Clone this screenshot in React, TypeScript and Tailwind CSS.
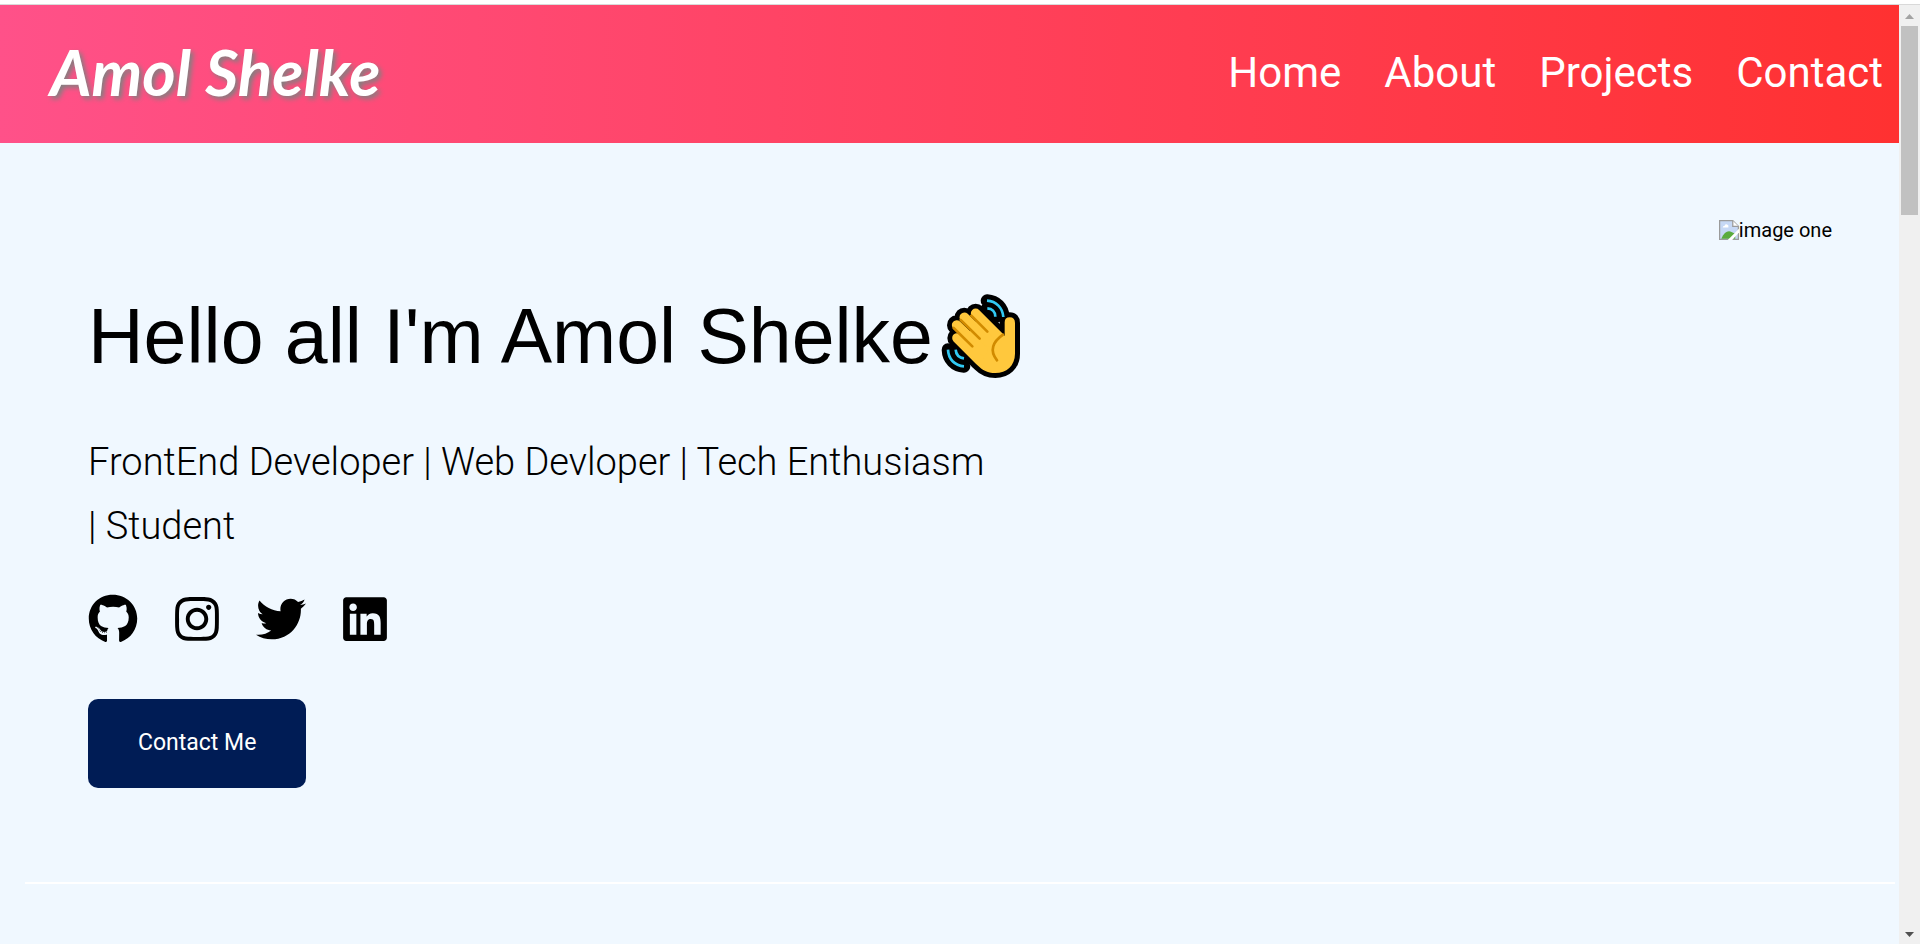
import { FaGithub, FaInstagram, FaTwitter, FaLinkedin } from "react-icons/fa";

const navItems = ["Home", "About", "Projects", "Contact"];

const socials = [
  { name: "GitHub", Icon: FaGithub },
  { name: "Instagram", Icon: FaInstagram },
  { name: "Twitter", Icon: FaTwitter },
  { name: "LinkedIn", Icon: FaLinkedin },
];

const handBody =
  "M315 196V156Q315 141 330 141Q346 141 346 158V250C346 286 320 308 287 308C262 308 246 297 235 286L180 230L230 150L300 190Z";
const handFingers = "M228 129L300 201M194 141L270 215M171 164L250 240M172 203L240 271";
const waves = "M262 91C290 93 309 112 311 140M263 114C277 115 287 124 287 139M145 238C146 266 165 286 193 288M168 238C169 253 178 262 193 264";

function WavingHand() {
  return (
    <svg viewBox="124 68 240 258" className="h-[86px] w-[80px] shrink-0" role="img" aria-label="Waving hand" fill="none" strokeLinecap="round" strokeLinejoin="round">
      <path d={waves} stroke="#000" strokeWidth="38" />
      <path d={handFingers} stroke="#000" strokeWidth="58" />
      <path d={handBody} stroke="#000" strokeWidth="30" fill="#000" />
      <path d={waves} stroke="#31c9f3" strokeWidth="8" strokeLinecap="butt" />
      <path d={handBody} fill="#ffc83d" />
      <path d={handFingers} stroke="#ffc83d" strokeWidth="29" />
      <path d="M215 136L263 184M183 149L240 205M162 173L218 228M310 193C280 214 268 240 292 270" stroke="#d18b00" strokeWidth="8" />
    </svg>
  );
}

function BrokenImage() {
  return (
    <svg viewBox="0 0 16 16" className="h-5 w-5" aria-hidden="true">
      <path d="M.5.5H11L15.500 5V15.500H.5Z" fill="#c6d8f5" stroke="#9b9b9b" />
      <path d="M2 14.500C4 10 7 8 10 9.500L13 11V15H2Z" fill="#5aab3d" />
      <path d="M3 6Q3 4.500 4.500 4.500Q5 3 6.500 3.500Q8 4 7.500 6Z" fill="#fff" />
      <path d="M11 .5V5H15.500" fill="#fff" stroke="#9b9b9b" />
      <path d="M16 7V10L10.500 16H7Z" fill="#fff" />
    </svg>
  );
}

function ScrollTrack() {
  return (
    <div className="flex w-[21px] shrink-0 flex-col items-center bg-[#f0f0f0]" aria-hidden="true">
      <svg viewBox="0 0 21 21" className="h-[21px] w-[21px]"><path d="M6 14L10.500 9L15 14Z" fill="#a3a3a3" /></svg>
      <div className="h-[189px] w-[17px] bg-[#c1c1c1]" />
      <svg viewBox="0 0 21 21" className="mt-auto h-[21px] w-[21px]"><path d="M6 9H15L10.500 14Z" fill="#505050" /></svg>
    </div>
  );
}

export default function App() {
  return (
    <div className="flex min-h-screen flex-col border-t-4 border-white font-[Roboto,sans-serif] text-black">
      <div className="flex flex-1 border-t border-[#d9d9d9]">
        <div className="min-w-0 flex-1 bg-[#f0f8ff]">
          <header className="flex h-[138px] items-center justify-between bg-linear-to-r/srgb from-[#ff5189] to-[#ff3131] pr-4 pb-1 pl-[50px] text-white">
            <a href="#home" className="font-[Lato,cursive] text-[64px] leading-none font-bold italic [text-shadow:3px_3px_5px_#808080]">
              Amol Shelke
            </a>
            <nav className="flex gap-[43px] text-[42px]">
              {navItems.map((item) => (
                <a key={item} href={`#${item.toLowerCase()}`}>{item}</a>
              ))}
            </nav>
          </header>

          <main>
            <section className="flex items-start justify-between pt-[75px] pr-[67px] pl-[88px]">
              <div className="pt-[72px]">
                <h1 className="flex items-center gap-2 font-['Liberation_Sans',sans-serif] text-[77px] leading-[92px]">
                  <span>Hello all I'm Amol Shelke</span>
                  <WavingHand />
                </h1>
                <p className="mt-12 max-w-[908px] text-[38px] leading-[64px] font-light">
                  FrontEnd Developer | Web Devloper | Tech Enthusiasm | Student
                </p>
                <div className="mt-9 flex gap-[34px]">
                  {socials.map(({ name, Icon }) => (
                    <a key={name} href={`#${name.toLowerCase()}`} aria-label={name}>
                      <Icon className="size-[50px]" />
                    </a>
                  ))}
                </div>
                <button type="button" className="mt-[55px] h-[89px] rounded-[10px] bg-[#001c55] px-[50px] text-[23px] text-white">
                  Contact Me
                </button>
              </div>
              <div className="flex items-center text-[20px] leading-6">
                <BrokenImage />
                <span>image one</span>
              </div>
            </section>
            <hr className="mt-[94px] mr-1 ml-[25px] border-t-2 border-white" />
          </main>
        </div>
        <ScrollTrack />
      </div>
    </div>
  );
}
